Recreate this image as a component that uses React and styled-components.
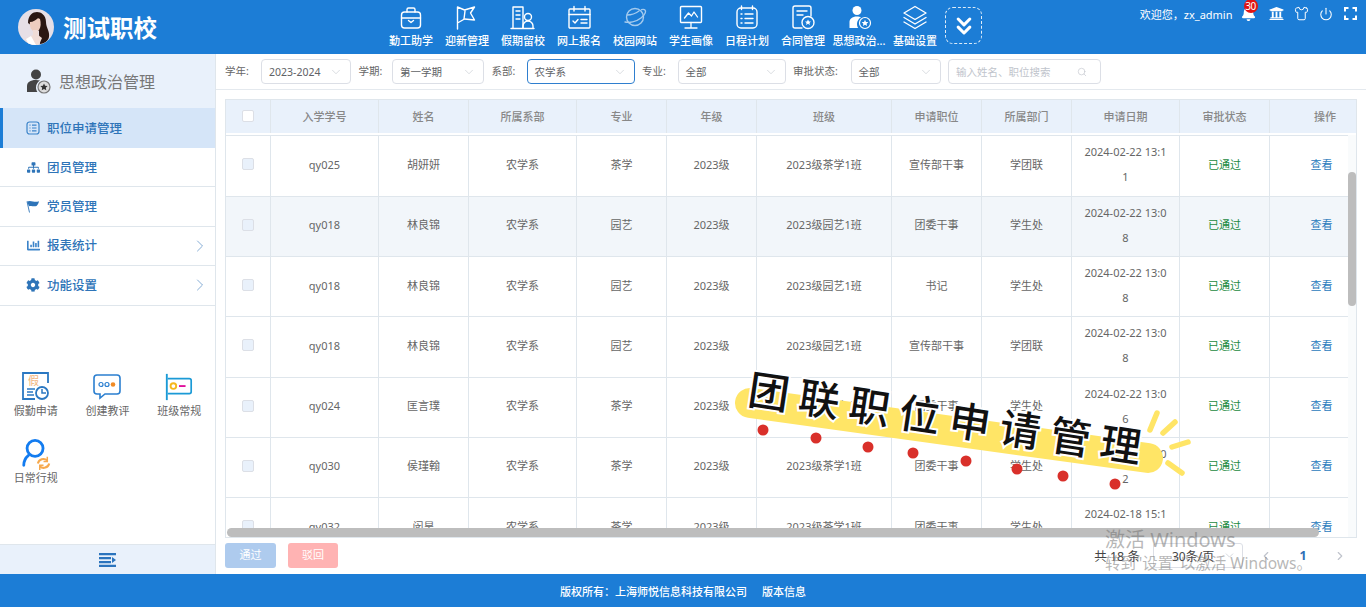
import React from "react";
import styled, { createGlobalStyle } from "styled-components";
import { ChevronDown, ChevronLeft, ChevronRight, ChevronsDown, Power, Search, Shirt } from "lucide-react";
import { FaBell, FaChartBar, FaCog, FaSitemap, FaUniversity } from "react-icons/fa";

const BLUE = "#1c7dd6";
const LINE = "#dfe6ec";
const FONT = `"Noto Sans", "Noto Sans CJK SC", "Liberation Sans", sans-serif`;

const GlobalStyle = createGlobalStyle`
  html, body { margin: 0; padding: 0; height: 100%; }
  body { font-family: ${FONT}; font-size: 11px; color: #666; background: #fff; }
  #root { height: 100%; }
  * { box-sizing: border-box; }
`;

const Page = styled.div`
  position: relative;
  height: 607px;
  width: 1366px;
  overflow: hidden;
  display: flex;
  flex-direction: column;
`;

/* top bar */
const Header = styled.header`
  height: 54px;
  flex: none;
  background: ${BLUE};
  display: flex;
  color: #fff;
`;
const Brand = styled.div`
  width: 383px;
  flex: none;
  display: flex;
  align-items: center;
  gap: 9px;
  padding-left: 18px;
`;
const Avatar = styled.svg`
  width: 36px;
  height: 36px;
  border-radius: 50%;
`;
const BrandName = styled.div`
  font-size: 23.5px;
  font-weight: 700;
  letter-spacing: 0;
`;
const Nav = styled.nav`
  display: flex;
  padding-top: 4px;
`;
const NavItem = styled.div`
  width: 56px;
  display: flex;
  flex-direction: column;
  align-items: center;
  gap: 2px;
  font-size: 11px;
  font-weight: 500;
  white-space: nowrap;
  svg { display: block; }
`;
const MoreButton = styled.div`
  width: 37px;
  height: 37px;
  margin: 3px 0 0 2px;
  border: 1px dashed rgba(255, 255, 255, 0.85);
  border-radius: 8px;
  display: flex;
  align-items: center;
  justify-content: center;
`;
const UserBar = styled.div`
  position: absolute;
  top: 0;
  right: 8px;
  height: 27px;
  display: flex;
  align-items: center;
  font-size: 11px;
`;
const Welcome = styled.span`
  margin-right: 8px;
`;
const BellBox = styled.span`
  position: relative;
  display: flex;
  width: 15px;
  margin-right: 13px;
`;
const Badge = styled.span`
  position: absolute;
  top: -7px;
  left: 3px;
  width: 14px;
  height: 14px;
  border-radius: 50%;
  background: #e01414;
  font-size: 10px;
  line-height: 14px;
  text-align: center;
  letter-spacing: -0.5px;
`;
const UserIcon = styled.span`
  display: flex;
  width: 16px;
  margin-right: 8.5px;
  justify-content: center;
  &:last-child { margin-right: 0; }
`;

/* body */
const Body = styled.div`
  flex: 1;
  min-height: 0;
  display: flex;
`;
const Sidebar = styled.aside`
  width: 216px;
  flex: none;
  border-right: 1px solid ${LINE};
  display: flex;
  flex-direction: column;
`;
const SideTitle = styled.div`
  height: 54px;
  flex: none;
  background: #e9f1fb;
  display: flex;
  align-items: center;
  gap: 8px;
  padding-left: 25px;
  font-size: 16px;
  color: #777;
`;
const MenuItem = styled.div`
  height: ${(p) => (p.$active ? 40 : 39.4)}px;
  flex: none;
  display: flex;
  align-items: center;
  gap: 7px;
  padding-left: ${(p) => (p.$active ? 23 : 26)}px;
  padding-right: 5px;
  font-size: 12.5px;
  font-weight: 500;
  color: #2e74b8;
  background: ${(p) => (p.$active ? "#d5e5f8" : "#fff")};
  border-left: ${(p) => (p.$active ? `3px solid ${BLUE}` : "none")};
  border-bottom: ${(p) => (p.$active ? "none" : `1px solid ${LINE}`)};
`;
const MenuText = styled.span`
  padding-bottom: 2px;
`;
const MenuIcon = styled.span`
  width: 14px;
  display: flex;
  justify-content: center;
`;
const MenuArrow = styled.span`
  margin-left: auto;
  display: flex;
  color: #6d9ccc;
`;
const Shortcuts = styled.div`
  display: grid;
  grid-template-columns: repeat(3, 1fr);
  grid-auto-rows: 67px;
  margin-top: 65px;
`;
const Shortcut = styled.div`
  display: flex;
  flex-direction: column;
  align-items: center;
  font-size: 11px;
  color: #666;
  svg { display: block; margin-bottom: -1px; }
`;
const Collapse = styled.div`
  margin-top: auto;
  height: 30px;
  flex: none;
  background: #e9f1fb;
  border-top: 1px solid ${LINE};
  display: flex;
  align-items: center;
  justify-content: center;
`;

const Main = styled.main`
  flex: 1;
  min-width: 0;
  display: flex;
  flex-direction: column;
`;
const FilterBar = styled.div`
  height: 36px;
  flex: none;
  border-bottom: 1px solid #e4e9ee;
  display: flex;
  align-items: center;
  gap: 7.5px;
  padding: 0 0 0 9px;
`;
const Field = styled.div`
  display: flex;
  align-items: center;
`;
const FieldLabel = styled.span`
  width: ${(p) => p.$w}px;
  font-size: 10.5px;
  color: #666;
  padding-bottom: 3px;
  white-space: nowrap;
`;
const Select = styled.div`
  width: ${(p) => p.$w}px;
  height: 25px;
  display: flex;
  align-items: center;
  justify-content: space-between;
  padding: 0 7px;
  background: #fff;
  border: 1px solid ${(p) => (p.$focus ? "#2f7fcf" : "#dcdfe6")};
  border-radius: 4px;
  font-size: 10.5px;
  color: #606266;
  svg { color: #c0c4cc; }
`;
const SearchBox = styled(Select)`
  color: #c0c4cc;
  padding: 0 13px 0 7px;
`;

const Content = styled.div`
  flex: 1;
  min-height: 0;
  padding: 9px 9px 0;
  display: flex;
  flex-direction: column;
`;
const TableFrame = styled.div`
  position: relative;
  height: 439px;
  flex: none;
  border: 1px solid ${LINE};
  overflow: hidden;
  display: flex;
  flex-direction: column;
`;
const colTemplate = "45px 108px 90px 108px 90px 90px 135px 90px 90px 108px 90px 110px";
const HeadRow = styled.div`
  display: grid;
  grid-template-columns: ${colTemplate};
  height: 33px;
  flex: none;
  background: #e9f1fb;
`;
const HeadCell = styled.div`
  display: flex;
  align-items: center;
  justify-content: center;
  padding-bottom: 2px;
  border-right: 1px solid ${LINE};
  color: #888;
  font-weight: 500;
  &:last-child { border-right: none; }
`;
const TableBody = styled.div`
  flex: 1;
  min-height: 0;
  display: flex;
  padding-top: 2px;
  background: #fff;
`;
const RowsClip = styled.div`
  width: 1122px;
  flex: none;
  overflow: hidden;
  border-top: 1px solid ${LINE};
`;
const Track = styled.div`
  flex: 1;
  background: #f9fbfc;
`;
const Row = styled.div`
  display: grid;
  grid-template-columns: ${colTemplate};
  height: ${(p) => (p.$first ? 60.8 : 60.25)}px;
  background: ${(p) => (p.$hover ? "#f2f6fa" : "#fff")};
  border-bottom: 1px solid ${LINE};
`;
const Cell = styled.div`
  display: flex;
  align-items: center;
  justify-content: center;
  padding: 0 10px 3px;
  border-right: 1px solid ${LINE};
  text-align: center;
  line-height: 25px;
  word-break: break-all;
  color: ${(p) => p.$color || "#666"};
  &:last-child { border-right: none; padding: 0 17px 3px 10px; }
`;
const Check = styled.span`
  display: block;
  width: 12px;
  height: 12px;
  border: 1px solid #dcdfe6;
  border-radius: 2px;
  background: ${(p) => (p.$disabled ? "#e9f1fb" : "#fff")};
`;
const ScrollThumbV = styled.div`
  position: absolute;
  top: 72px;
  right: 0;
  width: 8px;
  height: 134px;
  border-radius: 4px;
  background: #bdbdbd;
`;
const ScrollThumbH = styled.div`
  position: absolute;
  left: 1px;
  bottom: 0;
  width: 1092px;
  height: 9px;
  border-radius: 5px;
  background: #bdbdbd;
`;
const Toolbar = styled.div`
  height: 36px;
  flex: none;
  display: flex;
  align-items: flex-start;
  padding-top: 5px;
`;
const ActionButton = styled.button`
  height: 25px;
  width: ${(p) => p.$w}px;
  margin-right: ${(p) => p.$mr || 0}px;
  border: none;
  border-radius: 3px;
  background: ${(p) => p.$bg};
  color: #fff;
  font-family: ${FONT};
  font-size: 11px;
  padding: 0 0 3px;
`;
const Pager = styled.div`
  margin-left: auto;
  display: flex;
  align-items: center;
  height: 25px;
  padding-right: 10px;
  color: #444;
  font-size: 12.5px;
`;
const PageSize = styled.div`
  width: 90px;
  height: 25px;
  margin: 0 16px 0 13px;
  padding-left: 18px;
  display: flex;
  align-items: center;
  gap: 9px;
  border: 1px solid #dcdfe6;
  border-radius: 3px;
  font-size: 12px;
  svg { color: #c0c4cc; }
`;
const PageNum = styled.span`
  width: 60px;
  text-align: center;
  color: #2e6fb5;
  font-weight: 700;
`;
const PageArrow = styled.span`
  display: flex;
  color: #c0c4cc;
`;
const Footer = styled.footer`
  height: 33px;
  flex: none;
  background: ${BLUE};
  color: #fff;
  display: flex;
  align-items: center;
  justify-content: center;
  gap: 15px;
  font-size: 11px;
  font-weight: 500;
`;

/* overlays */
const Sticker = styled.div`
  position: absolute;
  left: 720px;
  top: 350px;
  width: 480px;
  height: 150px;
  pointer-events: none;
`;
const StickerShape = styled.svg`
  position: absolute;
  inset: 0;
`;
const StickerText = styled.div`
  position: absolute;
  left: 29px;
  top: 11px;
  white-space: nowrap;
  font-family: "Noto Sans CJK SC", sans-serif;
  font-size: 41px;
  line-height: 56px;
  font-weight: 500;
  letter-spacing: 9.8px;
  color: #111;
  -webkit-text-stroke: 4px #fff;
  paint-order: stroke fill;
  transform: rotate(8.6deg);
  transform-origin: 21px 28px;
`;
const Watermark = styled.div`
  position: absolute;
  left: 1105px;
  top: 527px;
  color: rgba(110, 110, 110, 0.5);
  pointer-events: none;
  white-space: nowrap;
`;
const WmBig = styled.div`
  font-size: 20px;
  line-height: 25px;
`;
const WmSmall = styled.div`
  font-size: 15.5px;
  line-height: 22px;
`;

const stroke = { fill: "none", stroke: "#fff", strokeWidth: 1.4, strokeLinecap: "round", strokeLinejoin: "round" };

const navIcons = [
  <g {...stroke}>
    <rect x="3.5" y="8" width="19" height="16" rx="3" />
    <path d="M9 8V5.5A1.5 1.5 0 0 1 10.5 4h5A1.5 1.5 0 0 1 17 5.5V8M3.5 14h19M10.5 16.5l2.5 2 2.500-2" />
  </g>,
  <g {...stroke}>
    <path d="M3.500 25V3M3.500 3l7 3 10-3-4 6 4 7-10-1-7 4" />
    <path d="M11 7l-1 8" />
  </g>,
  <g {...stroke}>
    <path d="M3 24V3h10v21M1 24.500h23M6 7h4M6 11h4M6 15h4" />
    <circle cx="18" cy="13" r="3.500" />
    <path d="M13 24v-2a5 5 0 0 1 10 0v2" />
  </g>,
  <g {...stroke}>
    <rect x="3" y="5" width="21" height="19" rx="1" />
    <path d="M3 10.500h21M8 2.500V7M19 2.500V7M7 17l2 2 3-3.500M15 15.500h6M15 19h6" />
  </g>,
  <g {...stroke} opacity="0.6">
    <circle cx="13" cy="13" r="8.500" />
    <path d="M3 18c4 1 11 0 16-4s5-7 4-8c-.7-.8-2-.8-3.500-.4M5 11c3 0 8-1 12-4" />
  </g>,
  <g {...stroke}>
    <rect x="2.500" y="2.500" width="21" height="16" rx="1" />
    <path d="M6.500 14l4-5 3 3 2.500-4 3.500 5M13 18.500V23M7 24h12" strokeWidth="1.300" />
  </g>,
  <g {...stroke}>
    <rect x="3" y="4" width="20" height="20" rx="4" />
    <path d="M7.500 2v3.500M18.500 2v3.500M7 10h1M11 10h8M7 14.500h1M11 14.500h8M7 19h1M11 19h8" />
  </g>,
  <g {...stroke}>
    <path d="M12 24H5a2 2 0 0 1-2-2V4a2 2 0 0 1 2-2h14a2 2 0 0 1 2 2v8M7 7h10M7 11h6" />
    <circle cx="18" cy="18.500" r="6" />
    <path d="M18 15.500l1 2h2l-1.600 1.400.6 2-2-1.200-2 1.200.6-2L15 17.500h2z" fill="#fff" stroke="none" />
  </g>,
  <g>
    <circle cx="11" cy="6.500" r="4.500" fill="#fff" />
    <path d="M3.500 24v-6c0-3 2.500-5.500 7.500-5.500 1.500 0 3 .3 4 .8-2.500 1.500-4 4-4 6.700 0 1.500.4 3 1.300 4z" fill="#fff" />
    <circle cx="19" cy="19" r="5.500" fill="none" stroke="#fff" strokeWidth="1.200" />
    <path d="M19 15.800l1 2.100 2.300.2-1.700 1.600.5 2.300-2.100-1.200-2.100 1.200.5-2.300-1.700-1.600 2.300-.2z" fill="#fff" />
  </g>,
  <g {...stroke}>
    <path d="M13 2.500L24 9l-11 6.500L2 9zM2 13.500L13 20l11-6.500M2 18l11 6.500L24 18" />
  </g>,
];
const navLabels = ["勤工助学", "迎新管理", "假期留校", "网上报名", "校园网站", "学生画像", "日程计划", "合同管理", "思想政治...", "基础设置"];

const AvatarArt = () => (
  <Avatar viewBox="0 0 36 36">
    <rect width="36" height="36" fill="#e6dfe6" />
    <path d="M10 14c0-8 5-11 9-11s9 3 9 10c0 6 4 9 3 15-.7 4-5 7-9 7-1-5-1-9-1-13z" fill="#2a1713" />
    <path d="M12 12c2-3 7-4 10-2 1 4 1 8-1 11-2 2-5 2-7 0-2-2-2.500-6-2-9z" fill="#eecdbf" />
    <path d="M12 13c3 0 6-2 8-4l-4-3c-3 1-5 3-4 7z" fill="#2a1713" />
    <path d="M15 21h5v5l4 3-3 7H11l-4-6 8-4z" fill="#f0dcd6" />
    <path d="M8 30l5-3 5 9h-7z" fill="#fff" />
  </Avatar>
);

const PersonStar = () => (
  <svg width="26" height="26" viewBox="0 0 26 26">
    <circle cx="11" cy="6.500" r="5" fill="#444" />
    <path d="M2 24v-6c0-3.500 3-6 9-6 1.500 0 3 .2 4 .6-2.500 1.500-4 4-4 7 0 1.600.5 3.200 1.400 4.400z" fill="#444" />
    <circle cx="19" cy="19" r="6" fill="#ddd" stroke="#777" strokeWidth="1.200" />
    <path d="M19 15.400l1.100 2.300 2.500.3-1.800 1.700.5 2.500-2.300-1.300-2.300 1.300.5-2.500-1.800-1.700 2.500-.3z" fill="#333" />
  </svg>
);

const ListBook = () => (
  <svg width="14" height="14" viewBox="0 0 14 14" fill="none" stroke="#3b83c9" strokeWidth="1.200">
    <rect x="1" y="1" width="12" height="12" rx="2.500" />
    <path d="M3.500 4.200h1M6 4.200h4.500M3.500 7h1M6 7h4.500M3.500 9.800h1M6 9.800h4.500" />
  </svg>
);

const WaveFlag = () => (
  <svg width="14" height="14" viewBox="0 0 14 14" fill="#2e74b8">
    <path d="M1 1.500c2-1 4-.6 6 0s4 .4 6-.3c-.5 2-1.200 3.500-2.500 4.800-2 .6-3.600.2-5.500 0-.8 0-1.500 0-2 .3z" />
    <path d="M1 1.500l2.500 11" fill="none" stroke="#2e74b8" strokeWidth="0.900" />
  </svg>
);

const LeaveIcon = () => (
  <svg width="30" height="32" viewBox="0 0 30 32">
    <path d="M27 12V2H2v26h12" fill="#fff" stroke="#2b78c2" strokeWidth="1.800" />
    <text x="7" y="14" fontSize="11" fontFamily="Noto Sans CJK SC" fill="#f3b27a">假</text>
    <path d="M6 18h8M6 21h6M6 24h7" stroke="#2b78c2" strokeWidth="1.500" />
    <circle cx="21" cy="22" r="6" fill="#fff" stroke="#2b78c2" strokeWidth="1.800" />
    <path d="M21 18v4h4" fill="none" stroke="#2b78c2" strokeWidth="1.500" />
  </svg>
);
const ReviewIcon = () => (
  <svg width="30" height="32" viewBox="0 0 30 32">
    <path d="M5 4h20a3 3 0 0 1 3 3v13a3 3 0 0 1-3 3H13l-5 4v-4H5a3 3 0 0 1-3-3V7a3 3 0 0 1 3-3z" fill="#fff" stroke="#2b7fd0" strokeWidth="1.600" />
    <circle cx="9" cy="13.500" r="2" fill="none" stroke="#2b7fd0" strokeWidth="1.200" />
    <circle cx="15" cy="13.500" r="2" fill="none" stroke="#2b7fd0" strokeWidth="1.200" />
    <circle cx="21" cy="13.500" r="2.300" fill="#f08a24" />
  </svg>
);
const RoutineIcon = () => (
  <svg width="30" height="32" viewBox="0 0 32 32">
    <path d="M4 7h23a2 2 0 0 1 2 2v12a2 2 0 0 1-2 2H4" fill="#fff" stroke="#1b9ad6" strokeWidth="1.800" />
    <path d="M3 2v28" stroke="#1b9ad6" strokeWidth="2" />
    <circle cx="10" cy="15" r="3" fill="none" stroke="#f6b81c" strokeWidth="2" />
    <path d="M16 15h7" stroke="#e0109c" strokeWidth="2" />
  </svg>
);
const DailyIcon = () => (
  <svg width="32" height="32" viewBox="0 0 32 34">
    <circle cx="15" cy="11" r="8.500" fill="none" stroke="#137cf0" strokeWidth="3" />
    <path d="M3 29c0-5 2-8 5-10.500" fill="none" stroke="#137cf0" strokeWidth="3" strokeLinecap="round" />
    <path d="M18 27a6 6 0 0 1 10-3M30 27a6 6 0 0 1-10 3" fill="none" stroke="#f6a94e" strokeWidth="2.200" />
    <path d="M28 20v5h-4M20 34v-5h4" fill="none" stroke="#f6a94e" strokeWidth="1.600" />
  </svg>
);

const menu = [
  { label: "职位申请管理", icon: <ListBook />, active: true },
  { label: "团员管理", icon: <FaSitemap size={13} color="#2e74b8" /> },
  { label: "党员管理", icon: <WaveFlag /> },
  { label: "报表统计", icon: <FaChartBar size={13} color="#3b83c9" />, arrow: true },
  { label: "功能设置", icon: <FaCog size={14} color="#2e74b8" />, arrow: true },
];

const shortcuts = [
  { label: "假勤申请", icon: <LeaveIcon /> },
  { label: "创建教评", icon: <ReviewIcon /> },
  { label: "班级常规", icon: <RoutineIcon /> },
  { label: "日常行规", icon: <DailyIcon /> },
];

const columns = ["入学学号", "姓名", "所属系部", "专业", "年级", "班级", "申请职位", "所属部门", "申请日期", "审批状态", "操作"];

const rows = [
  ["qy025", "胡妍妍", "农学系", "茶学", "2023级", "2023级茶学1班", "宣传部干事", "学团联", "2024-02-22 13:11"],
  ["qy018", "林良锦", "农学系", "园艺", "2023级", "2023级园艺1班", "团委干事", "学生处", "2024-02-22 13:08"],
  ["qy018", "林良锦", "农学系", "园艺", "2023级", "2023级园艺1班", "书记", "学生处", "2024-02-22 13:08"],
  ["qy018", "林良锦", "农学系", "园艺", "2023级", "2023级园艺1班", "宣传部干事", "学团联", "2024-02-22 13:08"],
  ["qy024", "匡言璞", "农学系", "茶学", "2023级", "2023级茶学1班", "团委干事", "学生处", "2024-02-22 13:06"],
  ["qy030", "侯瑾翰", "农学系", "茶学", "2023级", "2023级茶学1班", "团委干事", "学生处", "2024-02-22 13:02"],
  ["qy032", "闵昊", "农学系", "茶学", "2023级", "2023级茶学1班", "团委干事", "学生处", "2024-02-18 15:13"],
];

const filters = [
  { label: "学年:", lw: 36, value: "2023-2024", w: 90 },
  { label: "学期:", lw: 33.5, value: "第一学期", w: 92 },
  { label: "系部:", lw: 35, value: "农学系", w: 108, focus: true },
  { label: "专业:", lw: 35.5, value: "全部", w: 108 },
  { label: "审批状态:", lw: 57.5, value: "全部", w: 90 },
];

const dots = [[43, 80], [96, 88], [148, 97], [193, 103], [246, 111], [297, 119], [343, 126], [395, 134]];

export default function App() {
  return (
    <Page>
      <GlobalStyle />
      <Header>
        <Brand>
          <AvatarArt />
          <BrandName>测试职校</BrandName>
        </Brand>
        <Nav>
          {navLabels.map((label, i) => (
            <NavItem key={label}>
              <svg width="26" height="26" viewBox="0 0 26 26">{navIcons[i]}</svg>
              <span>{label}</span>
            </NavItem>
          ))}
          <MoreButton>
            <ChevronsDown size={28} strokeWidth={2.6} color="#fff" />
          </MoreButton>
        </Nav>
        <UserBar>
          <Welcome>欢迎您，zx_admin</Welcome>
          <BellBox>
            <FaBell size={15} />
            <Badge>30</Badge>
          </BellBox>
          <UserIcon><FaUniversity size={15} /></UserIcon>
          <UserIcon><Shirt size={15} strokeWidth={1.6} /></UserIcon>
          <UserIcon><Power size={14} strokeWidth={1.8} /></UserIcon>
          <UserIcon>
            <svg width="13" height="13" viewBox="0 0 13 13" fill="none" stroke="#fff" strokeWidth="2">
              <path d="M1 4.500V1h3.500M8.500 1H12v3.500M12 8.500V12H8.500M4.500 12H1V8.500" />
            </svg>
          </UserIcon>
        </UserBar>
      </Header>

      <Body>
        <Sidebar>
          <SideTitle>
            <PersonStar />
            思想政治管理
          </SideTitle>
          {menu.map((item) => (
            <MenuItem key={item.label} $active={item.active}>
              <MenuIcon>{item.icon}</MenuIcon>
              <MenuText>{item.label}</MenuText>
              {item.arrow && (
                <MenuArrow><ChevronRight size={20} strokeWidth={1} /></MenuArrow>
              )}
            </MenuItem>
          ))}
          <Shortcuts>
            {shortcuts.map((s) => (
              <Shortcut key={s.label}>
                {s.icon}
                {s.label}
              </Shortcut>
            ))}
          </Shortcuts>
          <Collapse>
            <svg width="17" height="14" viewBox="0 0 17 14" fill="#2b74bd">
              <path d="M0 0h17v2.200H0zM0 4h12v2.200H0zM0 8h12v2.200H0zM0 11.800h17V14H0zM13 4l4 3-4 3z" />
            </svg>
          </Collapse>
        </Sidebar>

        <Main>
          <FilterBar>
            {filters.map((f) => (
              <Field key={f.label}>
                <FieldLabel $w={f.lw}>{f.label}</FieldLabel>
                <Select $w={f.w} $focus={f.focus}>
                  {f.value}
                  <ChevronDown size={14} strokeWidth={1} />
                </Select>
              </Field>
            ))}
            <SearchBox $w={153}>
              输入姓名、职位搜索
              <Search size={10} strokeWidth={1.500} />
            </SearchBox>
          </FilterBar>

          <Content>
            <TableFrame>
              <HeadRow>
                <HeadCell><Check /></HeadCell>
                {columns.map((c) => (
                  <HeadCell key={c}>{c}</HeadCell>
                ))}
              </HeadRow>
              <TableBody>
                <RowsClip>
                  {rows.map((r, i) => (
                    <Row key={i} $first={i === 0} $hover={i === 1}>
                      <Cell><Check $disabled /></Cell>
                      {r.map((v, j) => (
                        <Cell key={j}>{v}</Cell>
                      ))}
                      <Cell $color="#1c8a3f">已通过</Cell>
                      <Cell $color="#2b7bbd">查看</Cell>
                    </Row>
                  ))}
                </RowsClip>
                <Track />
              </TableBody>
              <ScrollThumbV />
              <ScrollThumbH />
            </TableFrame>
            <Toolbar>
              <ActionButton $w={51} $mr={12} $bg="#aecbee">通过</ActionButton>
              <ActionButton $w={50} $bg="#ffb3b3">驳回</ActionButton>
              <Pager>
                共 18 条
                <PageSize>
                  30条/页
                  <ChevronDown size={13} strokeWidth={1.200} />
                </PageSize>
                <PageArrow><ChevronLeft size={14} /></PageArrow>
                <PageNum>1</PageNum>
                <PageArrow><ChevronRight size={14} /></PageArrow>
              </Pager>
            </Toolbar>
          </Content>
        </Main>
      </Body>

      <Footer>
        <span>版权所有：上海师悦信息科技有限公司</span>
        <span>版本信息</span>
      </Footer>

      <Sticker>
        <StickerShape viewBox="0 0 480 150">
          <path d="M30 53L428 108" stroke="#ffe566" strokeWidth="30" strokeLinecap="round" fill="none" />
          <path d="M430 80l7-17M443 83l12-11M452 97l16-5M448 113l14 10" stroke="#ffe566" strokeWidth="5.500" strokeLinecap="round" fill="none" />
          {dots.map(([cx, cy]) => (
            <circle key={cx} cx={cx} cy={cy} r="5.500" fill="#d9302a" />
          ))}
        </StickerShape>
        <StickerText>团联职位申请管理</StickerText>
      </Sticker>

      <Watermark>
        <WmBig>激活 Windows</WmBig>
        <WmSmall>转到"设置"以激活 Windows。</WmSmall>
      </Watermark>
    </Page>
  );
}
